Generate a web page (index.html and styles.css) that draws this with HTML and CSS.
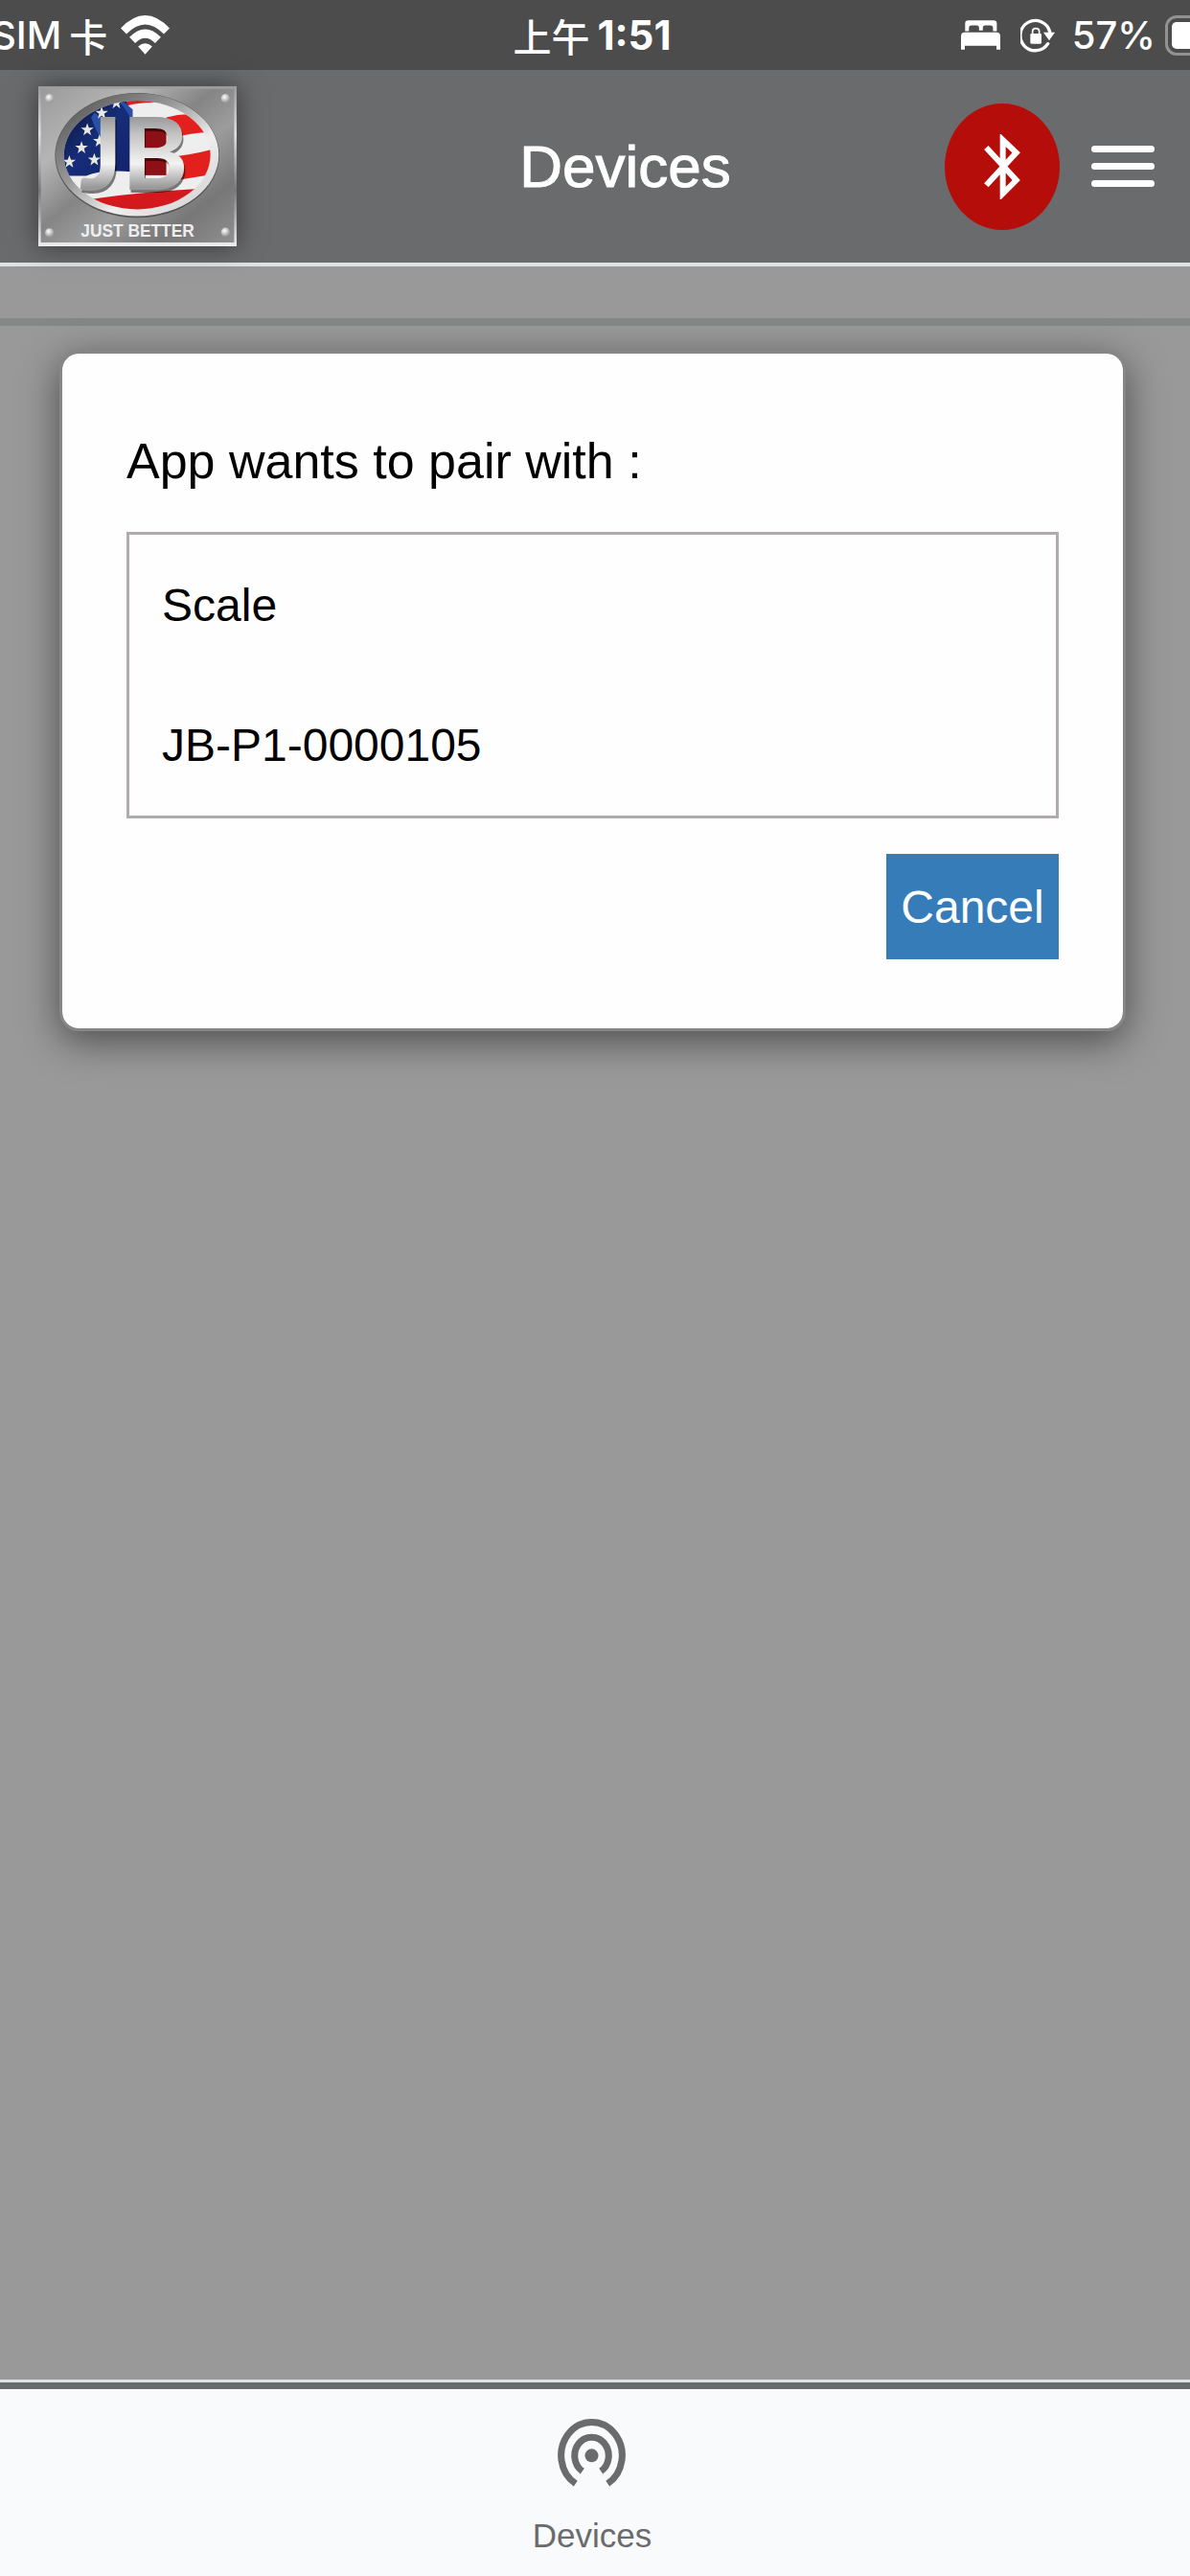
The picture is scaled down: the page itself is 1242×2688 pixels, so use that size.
FILE: index.html
```
<!DOCTYPE html>
<html lang="en">
<head>
    <meta charset="UTF-8">
    <meta name="viewport" content="width=device-width, initial-scale=1.0">
    <title>Devices</title>

    <link rel="stylesheet" href="styles.css">
</head>
<body>
    <div class="status-bar">
        <div class="status-left">
            <span class="carrier">SIM<span class="cjk">卡</span></span>
            <svg class="wifi" viewBox="0 0 152 122">
                <path d="M0 40 Q76 -40 152 40 L134 58 Q76 -2 18 58 Z" fill="#fff"/>
                <path d="M27 68 Q76 18 125 68 L107 86 Q76 55 45 86 Z" fill="#fff"/>
                <path d="M54 97 Q76 77 98 97 L76 121 Z" fill="#fff"/>
            </svg>
        </div>
        <div class="status-time"><span class="cjk">上午</span><span>1:51</span></div>
        <div class="status-right">
            <svg class="bed" viewBox="0 0 124 92">
                <path d="M13 34 V10 Q13 0 23 0 H103 Q113 0 113 10 V34 H101 V24 Q101 16 93 16 H76 Q69 16 69 24 V32 H57 V24 Q57 16 50 16 H33 Q25 16 25 24 V34 Z" fill="#fff"/>
                <path d="M0 92 V50 Q0 38 12 38 H112 Q124 38 124 50 V92 H112 V80 H12 V92 Z" fill="#fff"/>
            </svg>
            <svg class="lock" viewBox="0 0 108 108">
                <path d="M86 80 A47 47 0 1 1 92 42" fill="none" stroke="#fff" stroke-width="10" stroke-linecap="round"/>
                <path d="M72 44 H108 L90 70 Z" fill="#fff"/>
                <rect x="31" y="48" width="35" height="32" rx="4" fill="#fff"/>
                <path d="M38 50 V42 Q38 32 48 32 Q59 32 59 42 V50" fill="none" stroke="#fff" stroke-width="5"/>
            </svg>
            <span class="percent">57%</span>
            <div class="battery"></div>
        </div>
    </div>

    <header class="header">
        <svg class="logo" viewBox="30 33 620 498" preserveAspectRatio="none" role="img" aria-label="JB Just Better">
            <defs>
                <linearGradient id="plate" x1="0" y1="0" x2="1" y2="1">
                    <stop offset="0" stop-color="#9a9a9a"/>
                    <stop offset=".25" stop-color="#b5b5b5"/>
                    <stop offset=".45" stop-color="#858585"/>
                    <stop offset=".6" stop-color="#9c9c9c"/>
                    <stop offset=".8" stop-color="#777"/>
                    <stop offset="1" stop-color="#8f8f8f"/>
                </linearGradient>
                <linearGradient id="edge" x1="0" y1="0" x2="0" y2="1">
                    <stop offset="0" stop-color="#9b9b9b"/>
                    <stop offset=".3" stop-color="#ddd"/>
                    <stop offset=".65" stop-color="#777"/>
                    <stop offset="1" stop-color="#eee"/>
                </linearGradient>
                <linearGradient id="ring" x1="0" y1="0" x2="1" y2="1">
                    <stop offset=".1" stop-color="#5d5d5d"/>
                    <stop offset=".4" stop-color="#999"/>
                    <stop offset=".65" stop-color="#eee"/>
                    <stop offset="1" stop-color="#ccc"/>
                </linearGradient>
                <linearGradient id="metal" x1="0" y1="0" x2="0" y2="1">
                    <stop offset=".1" stop-color="#7a7a7a"/>
                    <stop offset=".35" stop-color="#c2c2c2"/>
                    <stop offset=".6" stop-color="#f3f3f3"/>
                    <stop offset=".8" stop-color="#999"/>
                </linearGradient>
                <linearGradient id="blue" x1="0" y1="0" x2="1" y2="1">
                    <stop offset="0" stop-color="#0a1230"/>
                    <stop offset=".5" stop-color="#162d78"/>
                    <stop offset="1" stop-color="#14216b"/>
                </linearGradient>
                <radialGradient id="rivet" cx=".4" cy=".35" r=".6">
                    <stop offset="0" stop-color="#fff"/>
                    <stop offset="1" stop-color="#999"/>
                </radialGradient>
                <clipPath id="oval"><ellipse cx="339" cy="247" rx="229" ry="169"/></clipPath>
                <path id="star" d="M0 -20 L5 -6 L20 -6 L8 3 L12 18 L0 9 L-12 18 L-8 3 L-20 -6 L-5 -6 Z" fill="#e8e8e0"/>
            </defs>
            <rect x="30" y="33" width="620" height="498" fill="url(#edge)"/>
            <rect x="38" y="41" width="604" height="478" fill="url(#plate)"/>
            <ellipse cx="339" cy="248" rx="257" ry="194" fill="#555"/>
            <ellipse cx="339" cy="246" rx="255" ry="191" fill="url(#ring)"/>
            <g clip-path="url(#oval)">
                <rect x="100" y="70" width="480" height="360" fill="#eee"/>
                <path d="M290 70 H370 L410 84 Q340 82 300 96 Z" fill="#d81f26"/>
                <path d="M430 130 Q500 110 580 130 V176 Q510 176 450 194 Z" fill="#e2211f"/>
                <path d="M440 252 Q500 250 580 228 V306 Q510 318 440 328 Z" fill="#e2211f"/>
                <path d="M190 385 Q340 362 530 352 V430 H190 Z" fill="#d3191e"/>
                <rect x="360" y="160" width="70" height="150" fill="#8c1015"/>
                <path d="M100 70 H300 Q330 120 330 300 Q230 290 180 312 L100 312 Z" fill="url(#blue)"/>
                <path d="M195 130 Q215 190 255 240 L270 200 Q235 130 205 115 Z" fill="#2950a8"/>
                <path d="M285 84 Q310 110 325 150 V105 L300 84 Z" fill="#2950a8"/>
                <use href="#star" x="165" y="224"/>
                <use href="#star" x="221" y="203"/>
                <use href="#star" x="205" y="261"/>
                <use href="#star" x="127" y="268"/>
                <use href="#star" x="183" y="168"/>
                <use href="#star" x="228" y="116"/>
                <use href="#star" x="274" y="84"/>
            </g>
            <text class="logo-shade" x="332" y="364" text-anchor="middle">JB</text>
            <text class="logo-letters" x="328" y="356" text-anchor="middle" fill="url(#metal)">JB</text>
            <text class="logo-words" x="340" y="502" text-anchor="middle">JUST BETTER</text>
            <circle cx="65" cy="71" r="14" fill="url(#rivet)"/>
            <circle cx="615" cy="71" r="14" fill="url(#rivet)"/>
            <circle cx="65" cy="489" r="14" fill="url(#rivet)"/>
            <circle cx="615" cy="487" r="14" fill="url(#rivet)"/>
        </svg>
        <h1 class="title">Devices</h1>
        <button class="bluetooth" aria-label="Bluetooth">
            <svg viewBox="0 0 120 204">
                <path d="M10 42 L104 144 L62 186 V18 L104 58 L10 160" fill="none" stroke="#fff" stroke-width="18"/>
            </svg>
        </button>
        <button class="menu" aria-label="Menu">
            <span></span>
            <span></span>
            <span></span>
        </button>
    </header>

    <div class="sub-bar"></div>

    <main class="content">
        <div class="pair-card">
            <p class="pair-text">App wants to pair with :</p>
            <div class="device-box">
                <p>Scale</p>
                <p>JB-P1-0000105</p>
            </div>
            <button class="cancel">Cancel</button>
        </div>
    </main>

    <nav class="tab-bar">
        <a href="#" class="tab">
            <svg viewBox="0 0 212 216" preserveAspectRatio="none">
                <circle cx="106" cy="115" r="21" fill="#6a6b6d"/>
                <path d="M77 164 A53 58 0 1 1 135 164" fill="none" stroke="#6a6b6d" stroke-width="21"/>
                <path d="M56 203 A95 104 0 1 1 156 203" fill="none" stroke="#6a6b6d" stroke-width="21"/>
            </svg>
            <span>Devices</span>
        </a>
    </nav>
</body>
</html>
```
FILE: styles.css
```
* {
    box-sizing: border-box;
}

body {
    margin: 0;
    min-height: 100vh;
    display: flex;
    flex-direction: column;
    background-color: #999;
    font-family: "Liberation Sans", Arial, sans-serif;
    overflow-x: hidden;
}

p, h1 {
    margin: 0;
}

button {
    border: none;
    padding: 0;
    font-family: inherit;
    cursor: pointer;
}

/* status bar */
.status-bar {
    height: 73px;
    padding-right: 6px;
    display: grid;
    grid-template-columns: 1fr auto 1fr;
    align-items: center;
    overflow: hidden;
    background-color: #4c4c4c;
    color: #fff;
    font-family: Inter, "Noto Sans CJK SC", sans-serif;
    font-size: 40px;
    font-weight: 500;
    line-height: 48px;
}

.status-left, .status-time, .status-right {
    display: flex;
    align-items: center;
}

.status-left {
    margin-left: -9px;
    gap: 14px;
}

.carrier {
    display: flex;
    gap: 8px;
}

.cjk {
    font-family: "Noto Sans CJK SC", sans-serif;
}

.status-time {
    gap: 8px;
    font-size: 42px;
    font-weight: 700;
}

.status-time .cjk {
    font-size: 40px;
    font-weight: 500;
}

.wifi {
    width: 51px;
    height: 41px;
}

.status-right {
    justify-content: flex-end;
    margin-right: -48px;
}

.bed {
    width: 41px;
    height: 31px;
    margin-right: 21px;
}

.lock {
    width: 36px;
    height: 36px;
    margin-right: 18px;
}

.percent {
    margin-right: 10px;
}

.battery {
    width: 68px;
    height: 42px;
    border: 3px solid #929292;
    border-radius: 12px;
    padding: 4px;
    background-color: #fff;
    background-clip: content-box;
}

/* header */
.header {
    height: 205px;
    padding: 0 37px 0 40px;
    display: flex;
    align-items: center;
    background-color: #6a6b6d;
    border-bottom: 4px solid #dce4e6;
}

.logo {
    width: 207px;
    height: 167px;
    box-shadow: 0 0 26px rgba(0, 0, 0, 0.5);
}

.logo-letters, .logo-shade {
    font-family: Lato, "Liberation Sans", sans-serif;
    font-weight: 900;
    font-size: 310px;
}

.logo-shade {
    fill: rgba(0, 0, 0, 0.5);
}

.logo-words {
    font-family: "Liberation Sans", Arial, sans-serif;
    font-weight: 700;
    font-size: 52px;
    fill: #eee;
}

.title {
    flex: 1;
    padding-left: 72px;
    text-align: center;
    color: #fff;
    font-size: 62px;
    font-weight: 400;
    -webkit-text-stroke: 1px #fff;
}

.bluetooth {
    width: 120px;
    height: 132px;
    display: flex;
    align-items: center;
    justify-content: center;
    background-color: #b50e0a;
    border-radius: 50%;
}

.bluetooth svg {
    width: 40px;
    height: 68px;
}

.menu {
    width: 66px;
    margin-left: 33px;
    display: flex;
    flex-direction: column;
    gap: 11px;
    background: none;
}

.menu span {
    height: 7px;
    border-radius: 4px;
    background-color: #fff;
}

.sub-bar {
    height: 62px;
    border-bottom: 8px solid #838887;
}

/* pairing card */
.content {
    flex: 1;
    padding: 26px 67px 0 62px;
}

.pair-card {
    padding: 80px 67px 72px;
    display: flex;
    flex-direction: column;
    background-color: #fefefe;
    background-clip: padding-box;
    border: 3px solid #868686;
    border-radius: 20px;
    box-shadow: 0 10px 40px rgba(0, 0, 0, 0.5);
}

.pair-text {
    margin-bottom: 42px;
    font-size: 52px;
    line-height: 64px;
}

.device-box {
    padding: 42px 34px 41px;
    display: flex;
    flex-direction: column;
    gap: 82px;
    border: 3px solid #b1abac;
    font-size: 48px;
    line-height: 64px;
}

.cancel {
    width: 180px;
    height: 110px;
    margin-top: 37px;
    align-self: flex-end;
    background-color: #357cb8;
    color: #fff;
    font-size: 48px;
}

/* bottom tabs */
.tab-bar {
    height: 205px;
    display: flex;
    justify-content: center;
    background-color: #f8fafc;
    border-top: 3px solid #dce4e6;
    box-shadow: inset 0 7px #6a6b6d;
}

.tab {
    padding: 38px 6px 0 0;
    display: flex;
    flex-direction: column;
    align-items: center;
    gap: 28px;
    color: #6a6b6d;
    font-size: 35px;
    line-height: 44px;
    text-decoration: none;
}

.tab svg {
    width: 71px;
    height: 72px;
}
```
